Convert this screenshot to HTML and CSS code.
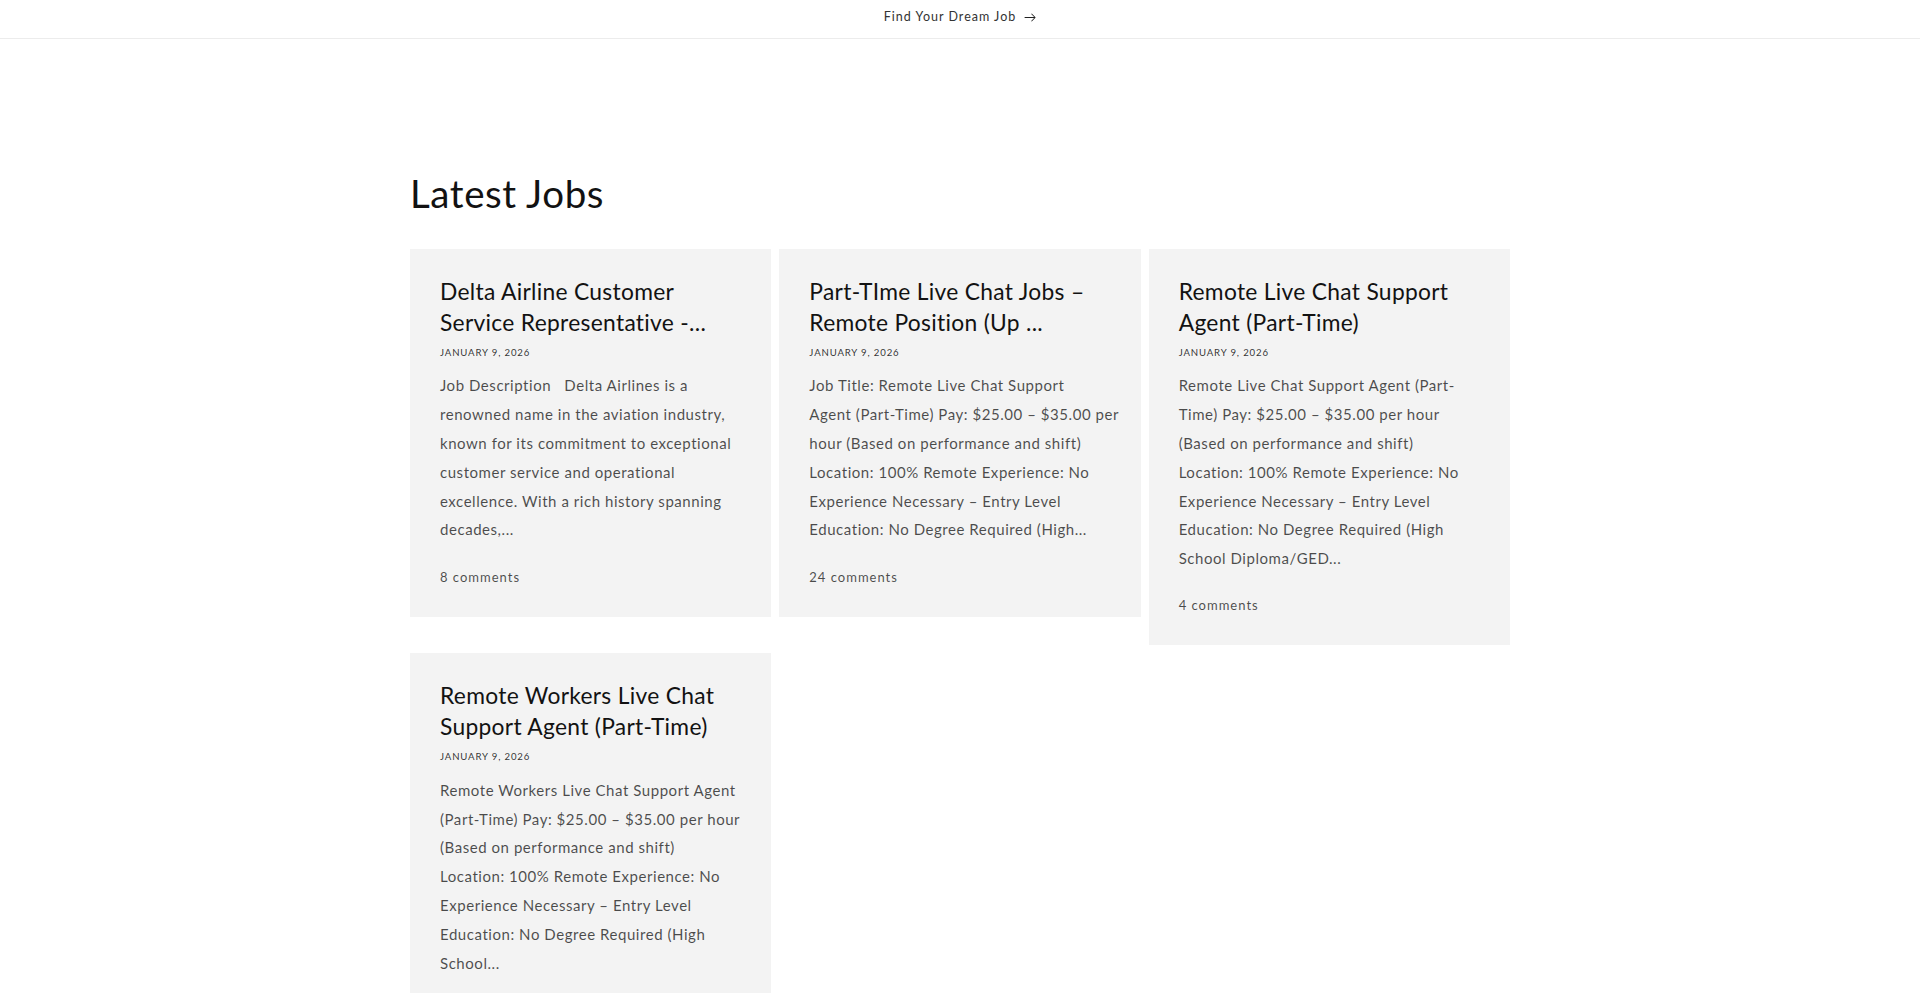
FILE: index.html
```html
<!DOCTYPE html>
<html lang="en">
<head>
<meta charset="utf-8">
<title>Latest Jobs</title>
<link rel="stylesheet" href="styles.css">
</head>
<body>
<div class="announcement">
  <a class="announcement__link" href="#">Find Your Dream Job<svg class="icon-arrow" viewBox="0 0 14 10" aria-hidden="true"><path fill-rule="evenodd" clip-rule="evenodd" d="M8.537.808a.5.5 0 01.817-.162l4 4a.5.5 0 010 .708l-4 4a.5.5 0 11-.708-.708L11.793 5.5H1a.5.5 0 010-1h10.793L8.646 1.354a.5.5 0 01-.109-.546z" fill="currentColor"/></svg></a>
</div>
<main class="blog">
  <h2 class="blog__title">Latest Jobs</h2>
  <ul class="blog__grid">
    <li class="card">
      <h3 class="card__title">Delta Airline Customer<br>Service Representative -...</h3>
      <p class="card__date">January 9, 2026</p>
      <p class="card__excerpt">Job Description&nbsp;&nbsp; Delta Airlines is a<br>renowned name in the aviation industry,<br>known for its commitment to exceptional<br>customer service and operational<br>excellence. With a rich history spanning<br>decades,...</p>
      <p class="card__footer">8 comments</p>
    </li>
    <li class="card">
      <h3 class="card__title">Part-TIme Live Chat Jobs –<br>Remote Position (Up ...</h3>
      <p class="card__date">January 9, 2026</p>
      <p class="card__excerpt">Job Title: Remote Live Chat Support<br>Agent (Part-Time) Pay: $25.00 – $35.00 per<br>hour (Based on performance and shift)<br>Location: 100% Remote Experience: No<br>Experience Necessary – Entry Level<br>Education: No Degree Required (High...</p>
      <p class="card__footer">24 comments</p>
    </li>
    <li class="card">
      <h3 class="card__title">Remote Live Chat Support<br>Agent (Part-Time)</h3>
      <p class="card__date">January 9, 2026</p>
      <p class="card__excerpt">Remote Live Chat Support Agent (Part-<br>Time) Pay: $25.00 – $35.00 per hour<br>(Based on performance and shift)<br>Location: 100% Remote Experience: No<br>Experience Necessary – Entry Level<br>Education: No Degree Required (High<br>School Diploma/GED...</p>
      <p class="card__footer">4 comments</p>
    </li>
    <li class="card">
      <h3 class="card__title">Remote Workers Live Chat<br>Support Agent (Part-Time)</h3>
      <p class="card__date">January 9, 2026</p>
      <p class="card__excerpt">Remote Workers Live Chat Support Agent<br>(Part-Time) Pay: $25.00 – $35.00 per hour<br>(Based on performance and shift)<br>Location: 100% Remote Experience: No<br>Experience Necessary – Entry Level<br>Education: No Degree Required (High<br>School...</p>
    </li>
  </ul>
</main>
</body>
</html>
```

FILE: styles.css
```css
* { box-sizing: border-box; }

html, body {
  margin: 0;
  padding: 0;
  background: #ffffff;
}

body {
  font-family: Lato, "Liberation Sans", sans-serif;
  color: #121212;
}

.announcement {
  height: 39px;
  border-bottom: 1px solid #ececec;
  display: flex;
  justify-content: center;
  padding-top: 7px;
}

.announcement__link {
  display: flex;
  align-items: center;
  height: 19px;
  font-size: 12.5px;
  letter-spacing: 1px;
  color: #333333;
  text-decoration: none;
}

.icon-arrow {
  width: 12px;
  height: 9px;
  margin-left: 8px;
  margin-top: 1px;
  color: #222222;
}

.blog {
  max-width: 1100px;
  margin: 0 auto;
  padding-top: 128px;
}

.blog__title {
  margin: 0 0 30px;
  font-weight: 400;
  font-size: 38.5px;
  line-height: 52px;
  letter-spacing: 0.6px;
  color: #121212;
}

.blog__grid {
  list-style: none;
  margin: 0;
  padding: 0;
  display: grid;
  grid-template-columns: repeat(3, minmax(0, 1fr));
  gap: 8px;
  align-items: start;
}

.card {
  background: #f3f3f3;
  padding: 26.5px 30px 30px;
  min-width: 0;
}

.card__title {
  margin: 0;
  font-weight: 400;
  font-size: 22.8px;
  line-height: 31.2px;
  letter-spacing: 0.3px;
  color: #121212;
  white-space: nowrap;
}

.card__date {
  margin: 9px 0 0;
  font-size: 9.6px;
  line-height: 12px;
  letter-spacing: 0.85px;
  text-transform: uppercase;
  color: rgba(18, 18, 18, 0.88);
}

.card__excerpt {
  margin: 12.5px 0 0;
  font-size: 15px;
  line-height: 28.8px;
  letter-spacing: 0.55px;
  color: rgba(18, 18, 18, 0.75);
  white-space: nowrap;
}

.card__footer {
  margin: 22.5px 0 0;
  font-size: 13px;
  line-height: 20px;
  letter-spacing: 1px;
  color: rgba(18, 18, 18, 0.75);
}
```
